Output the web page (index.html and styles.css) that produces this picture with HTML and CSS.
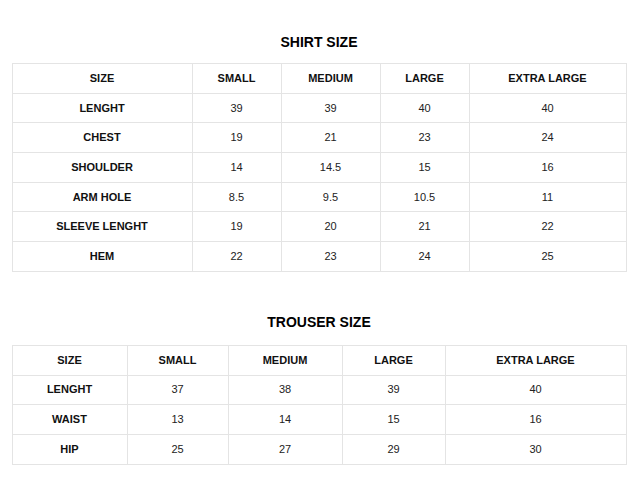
FILE: index.html
```html
<!DOCTYPE html>
<html>
<head>
<meta charset="utf-8">
<link rel="stylesheet" href="styles.css">
</head>
<body>
<section class="chart chart-shirt">
  <h2 class="chart-title">SHIRT SIZE</h2>
  <table class="size-table">
    <colgroup>
      <col class="s1"><col class="s2"><col class="s3"><col class="s4"><col class="s5">
    </colgroup>
    <tr class="head"><th>SIZE</th><th>SMALL</th><th>MEDIUM</th><th>LARGE</th><th>EXTRA LARGE</th></tr>
    <tr><th>LENGHT</th><td>39</td><td>39</td><td>40</td><td>40</td></tr>
    <tr><th>CHEST</th><td>19</td><td>21</td><td>23</td><td>24</td></tr>
    <tr><th>SHOULDER</th><td>14</td><td>14.5</td><td>15</td><td>16</td></tr>
    <tr><th>ARM HOLE</th><td>8.5</td><td>9.5</td><td>10.5</td><td>11</td></tr>
    <tr><th>SLEEVE LENGHT</th><td>19</td><td>20</td><td>21</td><td>22</td></tr>
    <tr><th>HEM</th><td>22</td><td>23</td><td>24</td><td>25</td></tr>
  </table>
</section>
<section class="chart chart-trouser">
  <h2 class="chart-title">TROUSER SIZE</h2>
  <table class="size-table">
    <colgroup>
      <col class="t1"><col class="t2"><col class="t3"><col class="t4"><col class="t5">
    </colgroup>
    <tr class="head"><th>SIZE</th><th>SMALL</th><th>MEDIUM</th><th>LARGE</th><th>EXTRA LARGE</th></tr>
    <tr><th>LENGHT</th><td>37</td><td>38</td><td>39</td><td>40</td></tr>
    <tr><th>WAIST</th><td>13</td><td>14</td><td>15</td><td>16</td></tr>
    <tr><th>HIP</th><td>25</td><td>27</td><td>29</td><td>30</td></tr>
  </table>
</section>
</body>
</html>
```
FILE: styles.css
```css
html, body {
  margin: 0;
  padding: 0;
  background: #fff;
}
body {
  font-family: "Liberation Sans", Arial, sans-serif;
  color: #111;
  padding-top: 34px;
}
.chart-title {
  margin: 0 0 13px;
  font-size: 14px;
  line-height: 16px;
  font-weight: bold;
  text-align: center;
  color: #000;
}
.chart-trouser {
  margin-top: 42px;
}
.chart-trouser .chart-title {
  margin-bottom: 15px;
}
.size-table {
  width: 614px;
  margin: 0 auto;
  border-collapse: collapse;
  table-layout: fixed;
  font-size: 11px;
}
.size-table th,
.size-table td {
  border: 1px solid #e4e4e4;
  height: 28.7px;
  padding: 0;
  text-align: center;
  vertical-align: middle;
  line-height: 13px;
}
.size-table th {
  font-weight: bold;
  color: #111;
}
.size-table td {
  font-weight: normal;
  color: #222;
}
.s1 { width: 180px; }
.s2 { width: 89px; }
.s3 { width: 99px; }
.s4 { width: 89px; }
.s5 { width: 157px; }
.t1 { width: 115px; }
.t2 { width: 101px; }
.t3 { width: 114px; }
.t4 { width: 103px; }
.t5 { width: 181px; }
```
